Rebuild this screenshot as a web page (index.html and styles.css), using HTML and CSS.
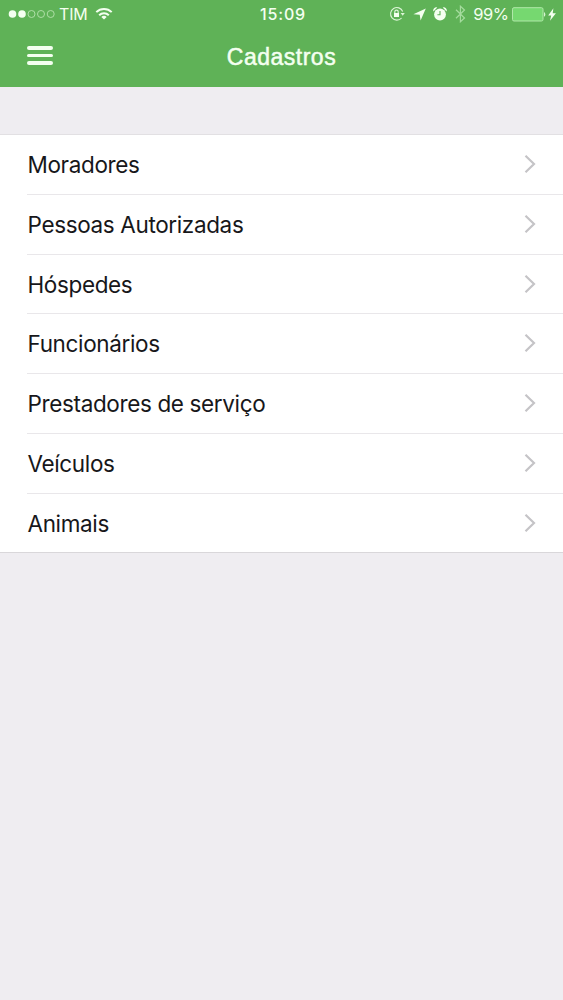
FILE: index.html
```html
<!DOCTYPE html>
<html lang="pt-BR">
<head>
<meta charset="utf-8">
<title>Cadastros</title>
<link rel="stylesheet" href="styles.css">
</head>
<body>
<header class="header">
  <div class="status">
    <div class="status-left">
      <svg class="signal" width="48" height="10" viewBox="0 0 48 10"><g fill="#f4fff0"><circle cx="4.5" cy="5" r="3.8"/><circle cx="14" cy="5" r="3.8"/></g><g fill="none" stroke="#b5e2ae" stroke-width=".9"><circle cx="23.5" cy="5" r="3.5"/><circle cx="33" cy="5" r="3.5"/><circle cx="42.7" cy="5" r="3.5"/></g></svg>
      <span class="carrier">TIM</span>
      <svg class="wifi" width="18" height="14" viewBox="0 0 18 14" fill="none" stroke="#f4fff0" stroke-width="2"><path d="M1.3 5.1a11 11 0 0 1 15.4 0M4.2 8.3a6.8 6.8 0 0 1 9.6 0"/><path d="M9 12.6 6.3 10a4 4 0 0 1 5.4 0z" fill="#f4fff0" stroke="none"/></svg>
    </div>
    <span class="clock">15:09</span>
    <div class="status-right">
      <svg width="16" height="16" viewBox="0 0 16 16" fill="none" stroke="#dcf5d7" stroke-width="1.1"><path d="M13.7 5.5A6.3 6.3 0 1 0 12.6 12"/><path d="M11.6 7h4.2l-2.1 2.8z" fill="#dcf5d7" stroke="none"/><path d="M5.8 7V5.8a1.7 1.7 0 0 1 3.4 0V7" stroke-width="1.2"/><rect x="5" y="7" width="5" height="4" fill="#f4fff0" stroke="none"/></svg>
      <svg width="13" height="13" viewBox="0 0 13 13" fill="#f4fff0"><path d="M12.8.5 7.6 12.6 6.7 6.7.4 6.2z"/></svg>
      <svg width="14" height="14" viewBox="0 0 14 14"><g fill="#f4fff0"><circle cx="7" cy="7.5" r="5.9"/><path d="M.4 4.4A3 3 0 0 1 4.3.6zM13.6 4.4A3 3 0 0 0 9.7.6z"/></g><path d="M7 4v3.8H4.4" fill="none" stroke="#5fb257" stroke-width="1.1"/></svg>
      <svg width="11" height="18" viewBox="0 0 11 18" fill="none" stroke="#a5dc9e" stroke-width="1.2"><path d="M1 4.8 9.5 13 5.4 16.8V1.2L9.5 5 1 13.2"/></svg>
      <span class="percent">99%</span>
      <svg class="battery" width="34" height="15" viewBox="0 0 34 15"><rect x=".5" y=".7" width="30.5" height="13.3" rx="1.5" fill="#76d870" stroke="#b0e8a9"/><path d="M32 5a2.8 2.8 0 0 1 0 4.8z" fill="#d4f4cf"/></svg>
      <svg class="bolt" width="8" height="13" viewBox="0 0 8 13" fill="#f4fff0"><path d="M5.4.3.2 7.4h3L2 12.7 7.9 5.2H4.7z"/></svg>
    </div>
  </div>
  <div class="nav">
    <button class="menu" aria-label="Menu"><span></span><span></span><span></span></button>
    <h1 class="title">Cadastros</h1>
  </div>
</header>
<main>
  <ul class="list">
    <li class="row"><span>Moradores</span><svg class="chevron" viewBox="0 0 12 20"><path d="M1.5 1.8 10 10l-8.5 8.2"/></svg></li>
    <li class="row"><span>Pessoas Autorizadas</span><svg class="chevron" viewBox="0 0 12 20"><path d="M1.5 1.8 10 10l-8.5 8.2"/></svg></li>
    <li class="row"><span>Hóspedes</span><svg class="chevron" viewBox="0 0 12 20"><path d="M1.5 1.8 10 10l-8.5 8.2"/></svg></li>
    <li class="row"><span>Funcionários</span><svg class="chevron" viewBox="0 0 12 20"><path d="M1.5 1.8 10 10l-8.5 8.2"/></svg></li>
    <li class="row"><span>Prestadores de serviço</span><svg class="chevron" viewBox="0 0 12 20"><path d="M1.5 1.8 10 10l-8.5 8.2"/></svg></li>
    <li class="row"><span>Veículos</span><svg class="chevron" viewBox="0 0 12 20"><path d="M1.5 1.8 10 10l-8.5 8.2"/></svg></li>
    <li class="row"><span>Animais</span><svg class="chevron" viewBox="0 0 12 20"><path d="M1.5 1.8 10 10l-8.5 8.2"/></svg></li>
  </ul>
</main>
</body>
</html>
```
FILE: styles.css
```css
* { box-sizing: border-box; }
body { margin: 0; min-height: 1000px; background: #efedf1; font-family: Inter, "Liberation Sans", sans-serif; color: #17171a; }
.header { height: 87px; background: #5fb257; color: #f4fff0; }
.status { display: grid; grid-template-columns: 1fr auto 1fr; align-items: center; height: 28px; padding: 0 7px 0 8px; font-size: 16px; }
.status-left, .status-right { display: flex; align-items: center; }
.status-right { justify-content: flex-end; gap: 7.5px; }
.carrier { margin-left: 3px; letter-spacing: -.2px; }
.wifi { margin-left: 8px; }
.clock { font-size: 16px; font-weight: 500; letter-spacing: .8px; padding-left: 2px; }
.percent { font-size: 16.5px; letter-spacing: -.5px; }
.battery { margin-left: -4.5px; }
.bolt { margin-left: -5px; }
.nav { display: grid; grid-template-columns: 1fr auto 1fr; align-items: center; height: 58px; padding: 0 27px; }
.menu { display: flex; flex-direction: column; gap: 4px; width: 26px; padding: 0; border: 0; background: none; margin-top: -3px; }
.menu span { height: 3.7px; border-radius: 2px; background: #f4fff0; }
.title { margin: 0; font: 400 23px "Liberation Sans", sans-serif; -webkit-text-stroke: .5px; letter-spacing: .5px; }
.list { list-style: none; margin: 47px 0 0; padding: 0 0 0 27px; background: #fff; border-top: 1px solid #e2e0e3; border-bottom: 1px solid #d9d7da; }
.row { display: flex; align-items: center; justify-content: space-between; height: 59.75px; padding: 0 27px 0 .5px; font-size: 22.5px; letter-spacing: -.36px; }
.row:first-child { height: 58.9px; }
.row + .row { border-top: 1px solid #e9e7ea; }
.chevron { width: 12px; height: 20px; fill: none; stroke: #c5c4c7; stroke-width: 2.2; margin-top: -1px; }
```
